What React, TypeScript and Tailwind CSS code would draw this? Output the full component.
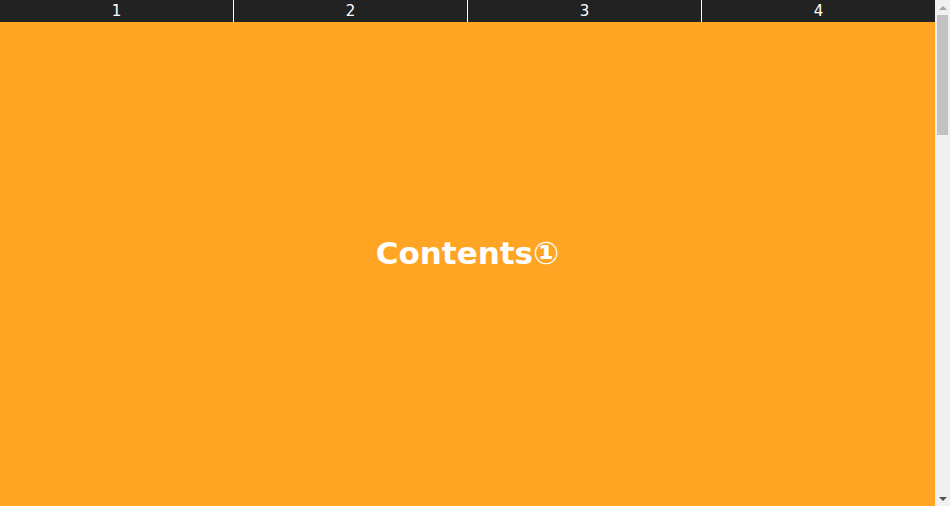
const tabs = ["1", "2", "3", "4"]

const sections = [
  { label: "Contents①", color: "bg-[#ffa523]" },
  { label: "Contents②", color: "bg-[#4fb3e8]" },
  { label: "Contents③", color: "bg-[#7cc35a]" },
  { label: "Contents④", color: "bg-[#e8607a]" },
]

function ScrollTrack() {
  return (
    <div className="flex w-[15px] shrink-0 flex-col items-center bg-[#f0f0f0]">
      <div className="flex h-[15px] w-full items-center justify-center">
        <div className="h-0 w-0 border-x-[4px] border-b-[4px] border-x-transparent border-b-[#a3a3a3]" />
      </div>
      <div className="h-[120px] w-[11px] bg-[#c1c1c1]" />
      <div className="flex-1" />
      <div className="flex h-[15px] w-full items-center justify-center">
        <div className="h-0 w-0 border-x-[4px] border-t-[4px] border-x-transparent border-t-[#505050]" />
      </div>
    </div>
  )
}

export default function App() {
  return (
    <div className="flex h-screen font-['DejaVu_Sans',Verdana,sans-serif]">
      <div className="relative flex-1 overflow-hidden">
        <nav className="sticky top-0 z-10 -mb-[22px] flex h-[22px] bg-[#222222]">
          {tabs.map((tab, i) => (
            <a
              key={tab}
              href={`#section${tab}`}
              className={`flex flex-1 items-center justify-center text-[15px] leading-none text-white ${
                i > 0 ? "border-l border-white" : ""
              }`}
            >
              {tab}
            </a>
          ))}
        </nav>

        {sections.slice(0, 1).map((s, i) => (
          <section
            key={s.label}
            id={`section${i + 1}`}
            className={`flex h-screen items-center justify-center ${s.color}`}
          >
            <h2 className="text-[31px] font-bold text-white">{s.label}</h2>
          </section>
        ))}
      </div>
      <ScrollTrack />
    </div>
  )
}
